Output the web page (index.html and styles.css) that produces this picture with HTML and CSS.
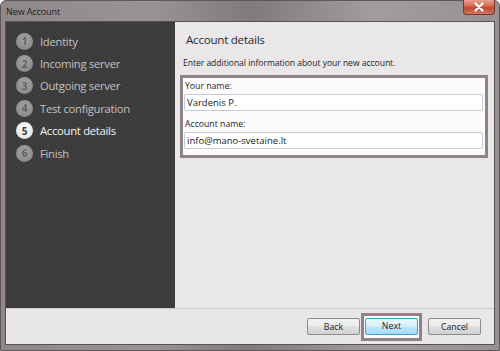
FILE: index.html
```html
<!DOCTYPE html>
<html>
<head>
<meta charset="utf-8">
<link rel="stylesheet" href="styles.css">
</head>
<body>
<div class="window">
  <div class="titlebar">
    <span class="title">New Account</span>
    <div class="close"><svg width="12" height="10" viewBox="0 0 12 10"><path d="M2.5 1.5 L9.5 8.5 M9.5 1.5 L2.5 8.5" stroke="#fff" stroke-width="2.2" stroke-linecap="round"/></svg></div>
  </div>
  <div class="inner">
    <div class="main">
      <div class="steps">
        <div class="step"><span class="num">1</span><span class="label">Identity</span></div>
        <div class="step"><span class="num">2</span><span class="label">Incoming server</span></div>
        <div class="step"><span class="num">3</span><span class="label">Outgoing server</span></div>
        <div class="step"><span class="num">4</span><span class="label">Test configuration</span></div>
        <div class="step active"><span class="num">5</span><span class="label">Account details</span></div>
        <div class="step"><span class="num">6</span><span class="label">Finish</span></div>
      </div>
      <div class="content">
        <div class="heading">Account details</div>
        <div class="desc">Enter additional information about your new account.</div>
        <div class="formbox">
          <div class="field-label">Your name:</div>
          <div class="input">Vardenis P.</div>
          <div class="field-label second">Account name:</div>
          <div class="input">info@mano-svetaine.lt</div>
        </div>
      </div>
    </div>
    <div class="footer">
      <div class="btn">Back</div>
      <div class="next-frame"><div class="btn primary">Next</div></div>
      <div class="btn cancel">Cancel</div>
    </div>
  </div>
</div>
</body>
</html>
```

FILE: styles.css
```css
html, body {
  margin: 0;
  padding: 0;
  width: 500px;
  height: 351px;
  overflow: hidden;
}
body {
  font-family: "Open Sans", "Noto Sans", sans-serif;
}
.window {
  width: 500px;
  height: 351px;
  box-sizing: border-box;
  background: linear-gradient(90deg, #8f8789 0%, #9a9396 30%, #7f7a7c 50%, #a29c9e 75%, #989194 100%);
  border: 1px solid #5e585a;
  border-radius: 6px 6px 0 0;
  display: flex;
  flex-direction: column;
  padding: 0 4px 5px 4px;
}
.titlebar {
  height: 20px;
  display: flex;
  align-items: center;
  justify-content: space-between;
  position: relative;
}
.title {
  font-size: 9px;
  letter-spacing: -0.1px;
  color: #1e1e1e;
  padding-left: 1px;
  padding-top: 1px;
}
.close {
  position: absolute;
  right: 0;
  top: -1px;
  width: 32px;
  height: 15px;
  border: 1px solid #6e3a32;
  border-top: none;
  border-radius: 0 0 4px 4px;
  background: linear-gradient(#e9a08f 0%, #d4654e 45%, #c04631 55%, #d2775f 100%);
  display: flex;
  align-items: center;
  justify-content: center;
  box-sizing: border-box;
}
.inner {
  flex: 1;
  display: flex;
  flex-direction: column;
  border: 1px solid #58534f;
  background: #e8e6e7;
}
.main {
  height: 286px;
  display: flex;
  border-bottom: 1px solid #c9c7c8;
}
.steps {
  width: 169px;
  background-color: #403f40;
  background-image:
    linear-gradient(45deg, #3b3a3b 25%, transparent 25%, transparent 75%, #3b3a3b 75%),
    linear-gradient(45deg, #3b3a3b 25%, transparent 25%, transparent 75%, #3b3a3b 75%);
  background-size: 4px 4px;
  background-position: 0 0, 2px 2px;
  padding-top: 8px;
  box-sizing: border-box;
}
.step {
  height: 22.4px;
  display: flex;
  align-items: center;
  padding-left: 10px;
  color: #c2c0c2;
  font-size: 11.3px;
  letter-spacing: -0.3px;
}
.num {
  width: 17px;
  height: 17px;
  border-radius: 50%;
  background: radial-gradient(circle at 50% 35%, #a3a2a3, #858485);
  color: #626162;
  font-size: 10px;
  font-weight: bold;
  letter-spacing: 0;
  display: flex;
  align-items: center;
  justify-content: center;
  margin-right: 7px;
}
.step.active { color: #f4f4f4; }
.step.active .num {
  background: radial-gradient(circle at 50% 35%, #ffffff, #dedede);
  color: #3a393a;
}
.content {
  flex: 1;
  padding: 8px 6px 0 5px;
  background: #e9e7e8;
}
.heading {
  font-size: 11.6px;
  letter-spacing: -0.25px;
  color: #2a2a2a;
  padding-left: 6px;
  height: 20px;
  line-height: 20px;
}
.desc {
  font-size: 8.6px;
  letter-spacing: -0.05px;
  color: #1e1e1e;
  padding-left: 3px;
  margin-top: 6px;
  height: 15px;
  line-height: 14px;
}
.formbox {
  margin-top: 4px;
  border: 3px solid #8e8388;
  background: #fbfbfb;
  padding: 0 2px 6px 1px;
  width: 308px;
  box-sizing: border-box;
}
.field-label {
  font-size: 8.7px;
  color: #1e1e1e;
  height: 16px;
  line-height: 17px;
  padding-left: 1px;
}
.field-label.second { margin-top: 6px; height: 15px; line-height: 15px; }
.input {
  height: 17px;
  box-sizing: border-box;
  border: 1px solid #c5ccd6;
  border-radius: 2px;
  background: #fff;
  font-size: 9.5px;
  line-height: 15px;
  padding-left: 2px;
  color: #1a1a1a;
}
.footer {
  flex: 1;
  display: flex;
  align-items: center;
  justify-content: flex-end;
  padding-right: 13px;
  padding-top: 0;
}
.btn {
  width: 53px;
  height: 17px;
  box-sizing: border-box;
  border: 1px solid #8c8c8c;
  border-radius: 2px;
  background: linear-gradient(#f3f3f3 0%, #ebebeb 48%, #dddddd 52%, #d2d2d2 100%);
  font-size: 8.8px;
  color: #1e1e1e;
  display: flex;
  align-items: center;
  justify-content: center;
}
.next-frame {
  border: 3px solid #8e8388;
  background: #fbfbfb;
  padding: 2px 1px 3px 1px;
  margin: 0 6px 0 1px;
}
.btn.primary {
  border-color: #3c9fd0;
  background: linear-gradient(#eaf6fd 0%, #d9f0fc 48%, #bee6fd 52%, #a7d9f5 100%);
}
```
